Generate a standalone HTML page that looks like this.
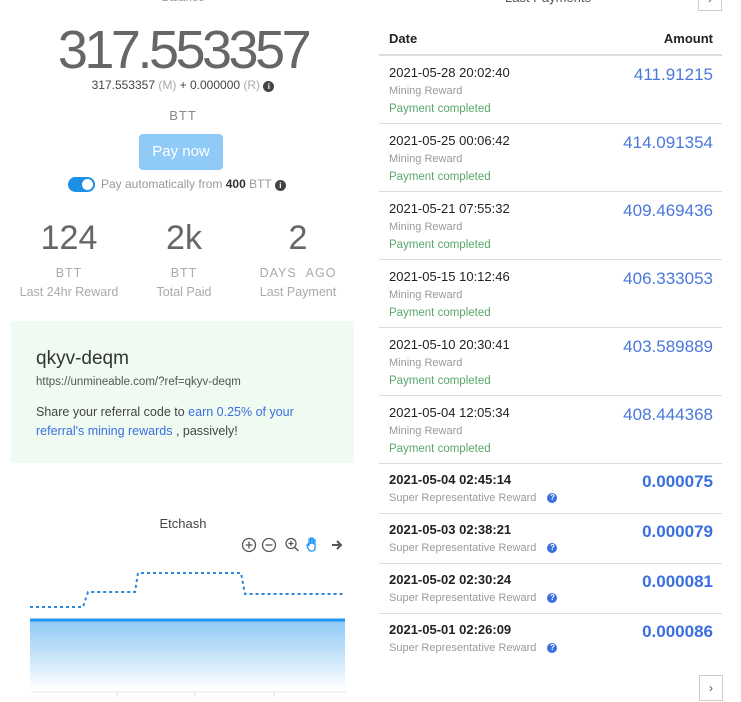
<!DOCTYPE html>
<html><head><meta charset="utf-8"><style>
*{margin:0;padding:0;box-sizing:border-box}
body{width:741px;height:702px;overflow:hidden;background:#fff;font-family:"Liberation Sans",sans-serif;color:#333;position:relative}
.a{position:absolute;white-space:nowrap}
.c{text-align:center}
.row{position:absolute;left:379px;width:343px;border-bottom:1px solid #dcdcdc}
.row .d{position:absolute;left:10px;font-size:13px;color:#222}
.row .m{position:absolute;left:10px;font-size:11px;color:#9a9a9a}
.row .g{position:absolute;left:10px;font-size:11.5px;color:#5aa66a}
.row .v{position:absolute;right:9px;font-size:17px;color:#4a77dc}
.q{display:inline-block;width:10px;height:10px;border-radius:50%;background:#3a6fe0;color:#fff;font-size:8px;line-height:10px;text-align:center;font-weight:bold;margin-left:8px;vertical-align:1px}
.i{display:inline-block;width:11px;height:11px;border-radius:50%;background:#444;color:#fff;font-size:8px;line-height:11px;text-align:center;font-weight:bold;vertical-align:0}
</style></head><body>
<div class="a c" style="left:0;width:366px;top:-10px;font-size:12px;color:#999">Balance</div>
<div class="a c" style="left:0;width:366px;top:19px;font-size:54px;letter-spacing:-3.5px;color:#666">317.553357</div>
<div class="a c" style="left:0;width:366px;top:78px;font-size:12px;color:#444">317.553357 <span style="color:#aaa">(M)</span> + 0.000000 <span style="color:#aaa">(R)</span> <span class="i">i</span></div>
<div class="a c" style="left:0;width:366px;top:108px;font-size:13px;color:#888;letter-spacing:1px">BTT</div>
<div class="a c" style="left:139px;width:84px;top:134px;height:36px;line-height:36px;background:#90cbf7;border-radius:4px;color:#fff;font-size:15px">Pay now</div>
<div class="a" style="left:68px;top:177px;width:27px;height:15px;border-radius:8px;background:#1d8fe6"><div style="position:absolute;right:2px;top:2px;width:11px;height:11px;border-radius:50%;background:#fff"></div></div>
<div class="a" style="left:101px;top:177px;font-size:12px;color:#999">Pay automatically from <b style="color:#333">400</b> BTT <span class="i">i</span></div>
<div class="a c" style="left:10px;width:118px;top:219px;font-size:34px;color:#666">124</div>
<div class="a c" style="left:125px;width:118px;top:219px;font-size:34px;color:#666">2k</div>
<div class="a c" style="left:239px;width:118px;top:219px;font-size:34px;color:#666">2</div>
<div class="a c" style="left:10px;width:118px;top:266px;font-size:12.5px;color:#aaa;letter-spacing:1px">BTT</div>
<div class="a c" style="left:125px;width:118px;top:266px;font-size:12.5px;color:#aaa;letter-spacing:1px">BTT</div>
<div class="a c" style="left:239px;width:118px;top:266px;font-size:12.5px;color:#aaa;letter-spacing:1px">DAYS &nbsp;AGO</div>
<div class="a c" style="left:10px;width:118px;top:285px;font-size:12.5px;color:#aaa">Last 24hr Reward</div>
<div class="a c" style="left:125px;width:118px;top:285px;font-size:12.5px;color:#aaa">Total Paid</div>
<div class="a c" style="left:239px;width:118px;top:285px;font-size:12.5px;color:#aaa">Last Payment</div>
<div class="a" style="left:11px;top:321px;width:343px;height:142px;background:#effaf0"></div>
<div class="a" style="left:36px;top:348px;font-size:19px;color:#333">qkyv-deqm</div>
<div class="a" style="left:36px;top:376px;font-size:11.5px;color:#555">https://unmineable.com/?ref=qkyv-deqm</div>
<div class="a" style="left:36px;top:403px;font-size:12.5px;color:#444;line-height:19px">Share your referral code to <span style="color:#3a6fe0">earn 0.25% of your</span><br><span style="color:#3a6fe0">referral's mining rewards</span> , passively!</div>
<div class="a c" style="left:0;width:366px;top:516px;font-size:13px;color:#444">Etchash</div>
<svg class="a" style="left:240px;top:536px" width="105" height="18" viewBox="0 0 105 18" fill="none" stroke="#555" stroke-width="1.3">
<circle cx="9" cy="9" r="6.5"/><path d="M9 5.5v7M5.5 9h7"/>
<circle cx="29" cy="9" r="6.5"/><path d="M25.5 9h7"/>
<circle cx="51" cy="7.5" r="5"/><path d="M54.5 11l4 4M51 5v5M48.5 7.5h5"/>
<path d="M70 15c-2-2-3-4-3-6l1-1 1 2V3h1.5v5V2h1.5v6V2.5h1.5v6V4h1.5v8c0 2-1 3-3 3z" stroke="#2196f3"/>
<path d="M92 9h8M97 5l4 4-4 4" stroke="#555" stroke-width="2"/>
</svg>
<svg class="a" style="left:28px;top:565px" width="320" height="135" viewBox="0 0 320 135">
<defs><linearGradient id="gr" x1="0" y1="0" x2="0" y2="1"><stop offset="0" stop-color="#8ec8f5"/><stop offset="1" stop-color="#fff"/></linearGradient></defs>
<path d="M2 42H55L60 27H107L110 8H213L217 29H317" fill="none" stroke="#2c88dc" stroke-width="2" stroke-dasharray="3 3"/>
<rect x="2" y="55" width="315" height="70" fill="url(#gr)"/>
<path d="M2 55H317" stroke="#2196f3" stroke-width="3"/>
<path d="M4 127H318" stroke="#e4e4e4"/><path d="M89 127v5M167 127v5M246 127v5" stroke="#ddd"/>
</svg>
<div class="a" style="left:505px;top:-10px;font-size:13px;color:#555">Last Payments</div>
<div class="a" style="left:698px;top:-14px;width:24px;height:25px;border:1px solid #ccc;font-size:12px;text-align:center;line-height:25px;color:#555">›</div>
<div class="a" style="left:389px;top:31px;font-size:13px;font-weight:bold;color:#222">Date</div>
<div class="a" style="left:600px;width:113px;top:31px;font-size:13px;font-weight:bold;color:#222;text-align:right">Amount</div>
<div class="a" style="left:379px;top:54px;width:343px;height:2px;background:#ddd"></div>
<div class="row" style="top:56px;height:68px"><div class="d" style="top:9px">2021-05-28 20:02:40</div><div class="m" style="top:29px">Mining Reward</div><div class="g" style="top:47px">Payment completed</div><div class="v" style="top:9px">411.91215</div></div>
<div class="row" style="top:124px;height:68px"><div class="d" style="top:9px">2021-05-25 00:06:42</div><div class="m" style="top:29px">Mining Reward</div><div class="g" style="top:47px">Payment completed</div><div class="v" style="top:9px">414.091354</div></div>
<div class="row" style="top:192px;height:68px"><div class="d" style="top:9px">2021-05-21 07:55:32</div><div class="m" style="top:29px">Mining Reward</div><div class="g" style="top:47px">Payment completed</div><div class="v" style="top:9px">409.469436</div></div>
<div class="row" style="top:260px;height:68px"><div class="d" style="top:9px">2021-05-15 10:12:46</div><div class="m" style="top:29px">Mining Reward</div><div class="g" style="top:47px">Payment completed</div><div class="v" style="top:9px">406.333053</div></div>
<div class="row" style="top:328px;height:68px"><div class="d" style="top:9px">2021-05-10 20:30:41</div><div class="m" style="top:29px">Mining Reward</div><div class="g" style="top:47px">Payment completed</div><div class="v" style="top:9px">403.589889</div></div>
<div class="row" style="top:396px;height:68px"><div class="d" style="top:9px">2021-05-04 12:05:34</div><div class="m" style="top:29px">Mining Reward</div><div class="g" style="top:47px">Payment completed</div><div class="v" style="top:9px">408.444368</div></div>
<div class="row" style="top:464px;height:50px"><div class="d" style="top:8px;font-weight:bold">2021-05-04 02:45:14</div><div class="m" style="top:28px">Super Representative Reward <span class="q">?</span></div><div class="v" style="top:8px;font-weight:bold;color:#3a6fe0">0.000075</div></div>
<div class="row" style="top:514px;height:50px"><div class="d" style="top:8px;font-weight:bold">2021-05-03 02:38:21</div><div class="m" style="top:28px">Super Representative Reward <span class="q">?</span></div><div class="v" style="top:8px;font-weight:bold;color:#3a6fe0">0.000079</div></div>
<div class="row" style="top:564px;height:50px"><div class="d" style="top:8px;font-weight:bold">2021-05-02 02:30:24</div><div class="m" style="top:28px">Super Representative Reward <span class="q">?</span></div><div class="v" style="top:8px;font-weight:bold;color:#3a6fe0">0.000081</div></div>
<div class="row" style="top:614px;height:50px;border-bottom:none"><div class="d" style="top:8px;font-weight:bold">2021-05-01 02:26:09</div><div class="m" style="top:28px">Super Representative Reward <span class="q">?</span></div><div class="v" style="top:8px;font-weight:bold;color:#3a6fe0">0.000086</div></div>
<div class="a" style="left:699px;top:675px;width:24px;height:26px;border:1px solid #ccc;font-size:12px;text-align:center;line-height:24px;color:#555">›</div>
</body></html>
